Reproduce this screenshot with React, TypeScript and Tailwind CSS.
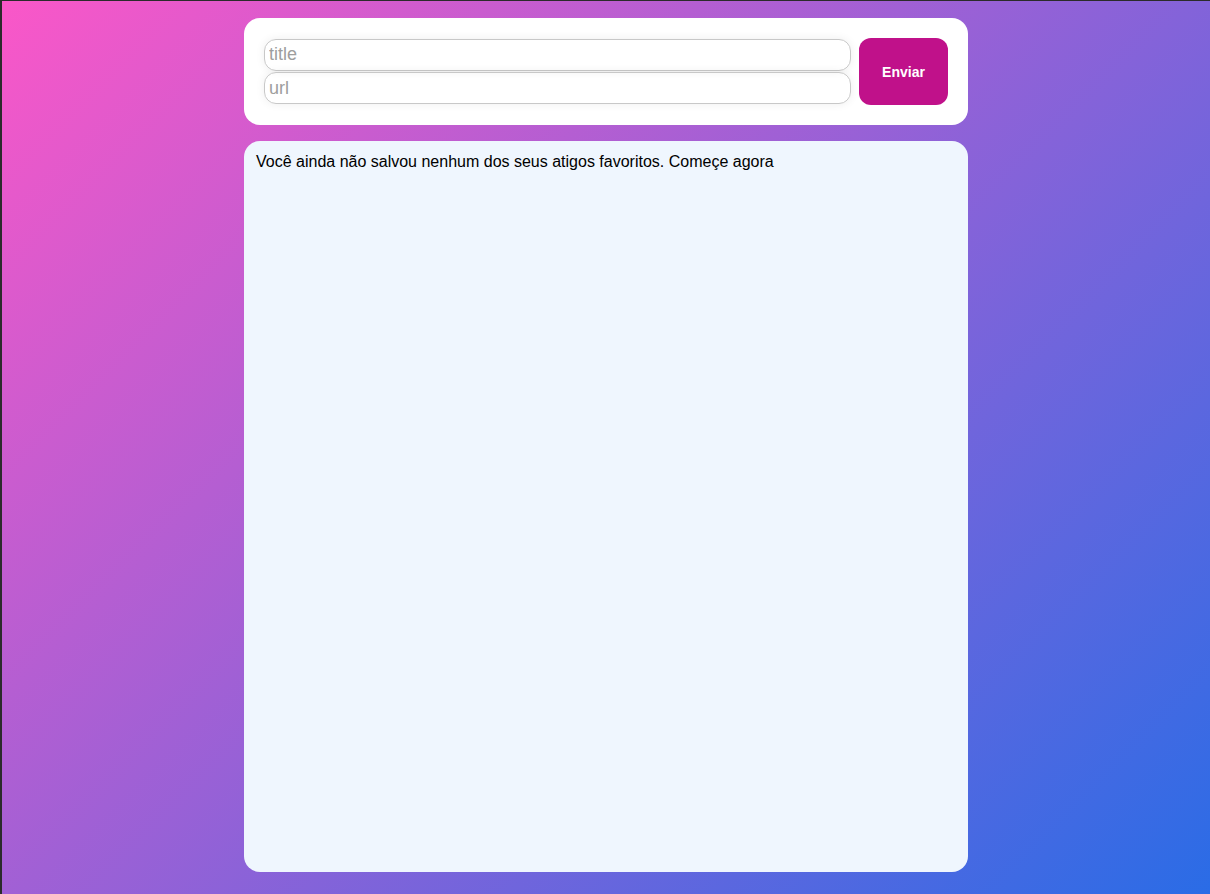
import { useState } from "react";

export default function App() {
  const [title, setTitle] = useState("");
  const [url, setUrl] = useState("");

  return (
    <div
      className="min-h-[894px] w-full bg-[linear-gradient(135deg,#fa57c8,#2a6ce6)] border-t border-l-2 border-[#2b2b2b] flex flex-col items-center pt-[17px] pb-[22px] gap-4"
      style={{ fontFamily: '"Liberation Sans", Arial, sans-serif' }}
    >
      <form
        onSubmit={e => e.preventDefault()}
        className="w-[724px] bg-white rounded-2xl p-5 flex gap-2 items-center"
      >
        <div className="flex-1 flex flex-col gap-px">
          <input
            type="text"
            value={title}
            onChange={e => setTitle(e.target.value)}
            placeholder="title"
            className="h-8 w-full rounded-xl border border-[#c8c8c8] px-1 pb-px text-lg text-gray-700 placeholder-[#9e9e9e] shadow-[0_0_10px_rgba(0,0,0,0.07)] outline-none"
          />
          <input
            type="text"
            value={url}
            onChange={e => setUrl(e.target.value)}
            placeholder="url"
            className="h-8 w-full rounded-xl border border-[#c8c8c8] px-1 text-lg text-gray-700 placeholder-[#9e9e9e] shadow-[0_0_10px_rgba(0,0,0,0.07)] outline-none"
          />
        </div>
        <button
          type="submit"
          className="w-[89px] h-[67px] rounded-xl bg-[#c0118a] text-white text-sm font-bold"
        >
          Enviar
        </button>
      </form>
      <div className="w-[724px] h-[731px] bg-[#eff6fe] rounded-2xl px-3 py-[9px] text-base text-black">
        Você ainda não salvou nenhum dos seus atigos favoritos. Começe agora
      </div>
    </div>
  );
}
